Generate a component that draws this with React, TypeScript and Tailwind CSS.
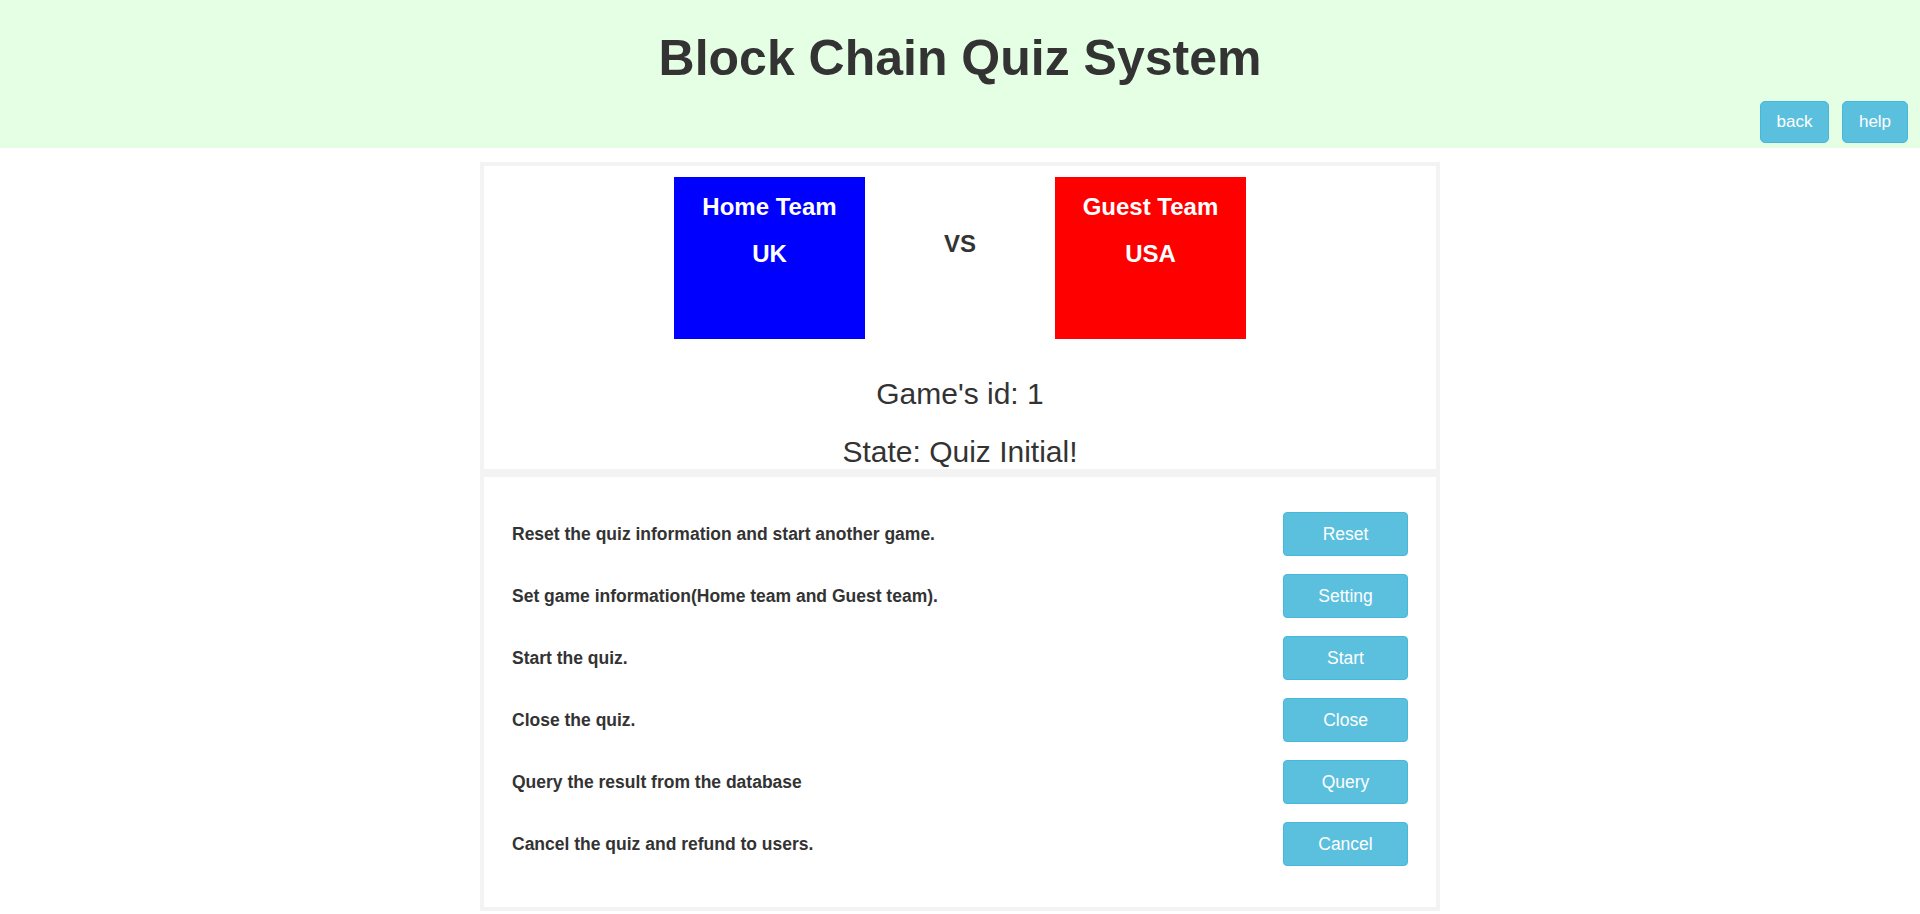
import React from 'react';

type Action = { text: string; label: string };

const ACTIONS: Action[] = [
  { text: 'Reset the quiz information and start another game.', label: 'Reset' },
  { text: 'Set game information(Home team and Guest team).', label: 'Setting' },
  { text: 'Start the quiz.', label: 'Start' },
  { text: 'Close the quiz.', label: 'Close' },
  { text: 'Query the result from the database', label: 'Query' },
  { text: 'Cancel the quiz and refund to users.', label: 'Cancel' },
];

const TeamBox: React.FC<{ title: string; name: string; color: string }> = ({ title, name, color }) => (
  <div className={`w-[191px] h-[162px] ${color} text-white text-center text-[24px] font-bold leading-[26px] pt-[17px]`}>
    <div>{title}</div>
    <div className="mt-[21px]">{name}</div>
  </div>
);

const App: React.FC = () => {
  return (
    <div className="min-h-screen bg-white text-[#333] font-['Liberation_Sans',Arial,sans-serif]">
      {/* Header */}
      <header className="h-[148px] bg-[#e5ffe5] pt-[29px]">
        <h1 className="text-center text-[50px] font-bold leading-[58px] text-[#333]">Block Chain Quiz System</h1>
        <div className="flex justify-end gap-[13px] pr-[12px] mt-[14px]">
          <button className="w-[69px] h-[42px] rounded-[5px] bg-[#5bc0de] border border-[#46b8da] text-white text-[17px]">
            back
          </button>
          <button className="w-[66px] h-[42px] rounded-[5px] bg-[#5bc0de] border border-[#46b8da] text-white text-[17px]">
            help
          </button>
        </div>
      </header>

      <main className="w-[960px] mx-auto mt-[14px]">
        {/* Game panel */}
        <section className="border-4 border-[#f3f3f3] pt-[11px]">
          <div className="flex justify-center">
            <TeamBox title="Home Team" name="UK" color="bg-[#0000ff]" />
            <div className="w-[190px] text-center text-[24px] font-bold leading-[26px] pt-[54px]">VS</div>
            <TeamBox title="Guest Team" name="USA" color="bg-[#ff0000]" />
          </div>
          <p className="mt-[38px] text-center text-[30px] leading-[34px]">Game's id: 1</p>
          <p className="mt-[24px] text-center text-[30px] leading-[34px]">State: Quiz Initial!</p>
        </section>

        {/* Actions panel */}
        <section className="border-4 border-[#f3f3f3] px-[28px] pt-[35px] pb-[41px] flex flex-col gap-[18px]">
          {ACTIONS.map((a) => (
            <div key={a.label} className="flex items-center justify-between">
              <span className="text-[17.5px] font-bold">{a.text}</span>
              <button className="w-[125px] h-[44px] rounded-[4px] bg-[#5bc0de] border border-[#46b8da] text-white text-[17.5px]">
                {a.label}
              </button>
            </div>
          ))}
        </section>
      </main>
    </div>
  );
};

export default App;
